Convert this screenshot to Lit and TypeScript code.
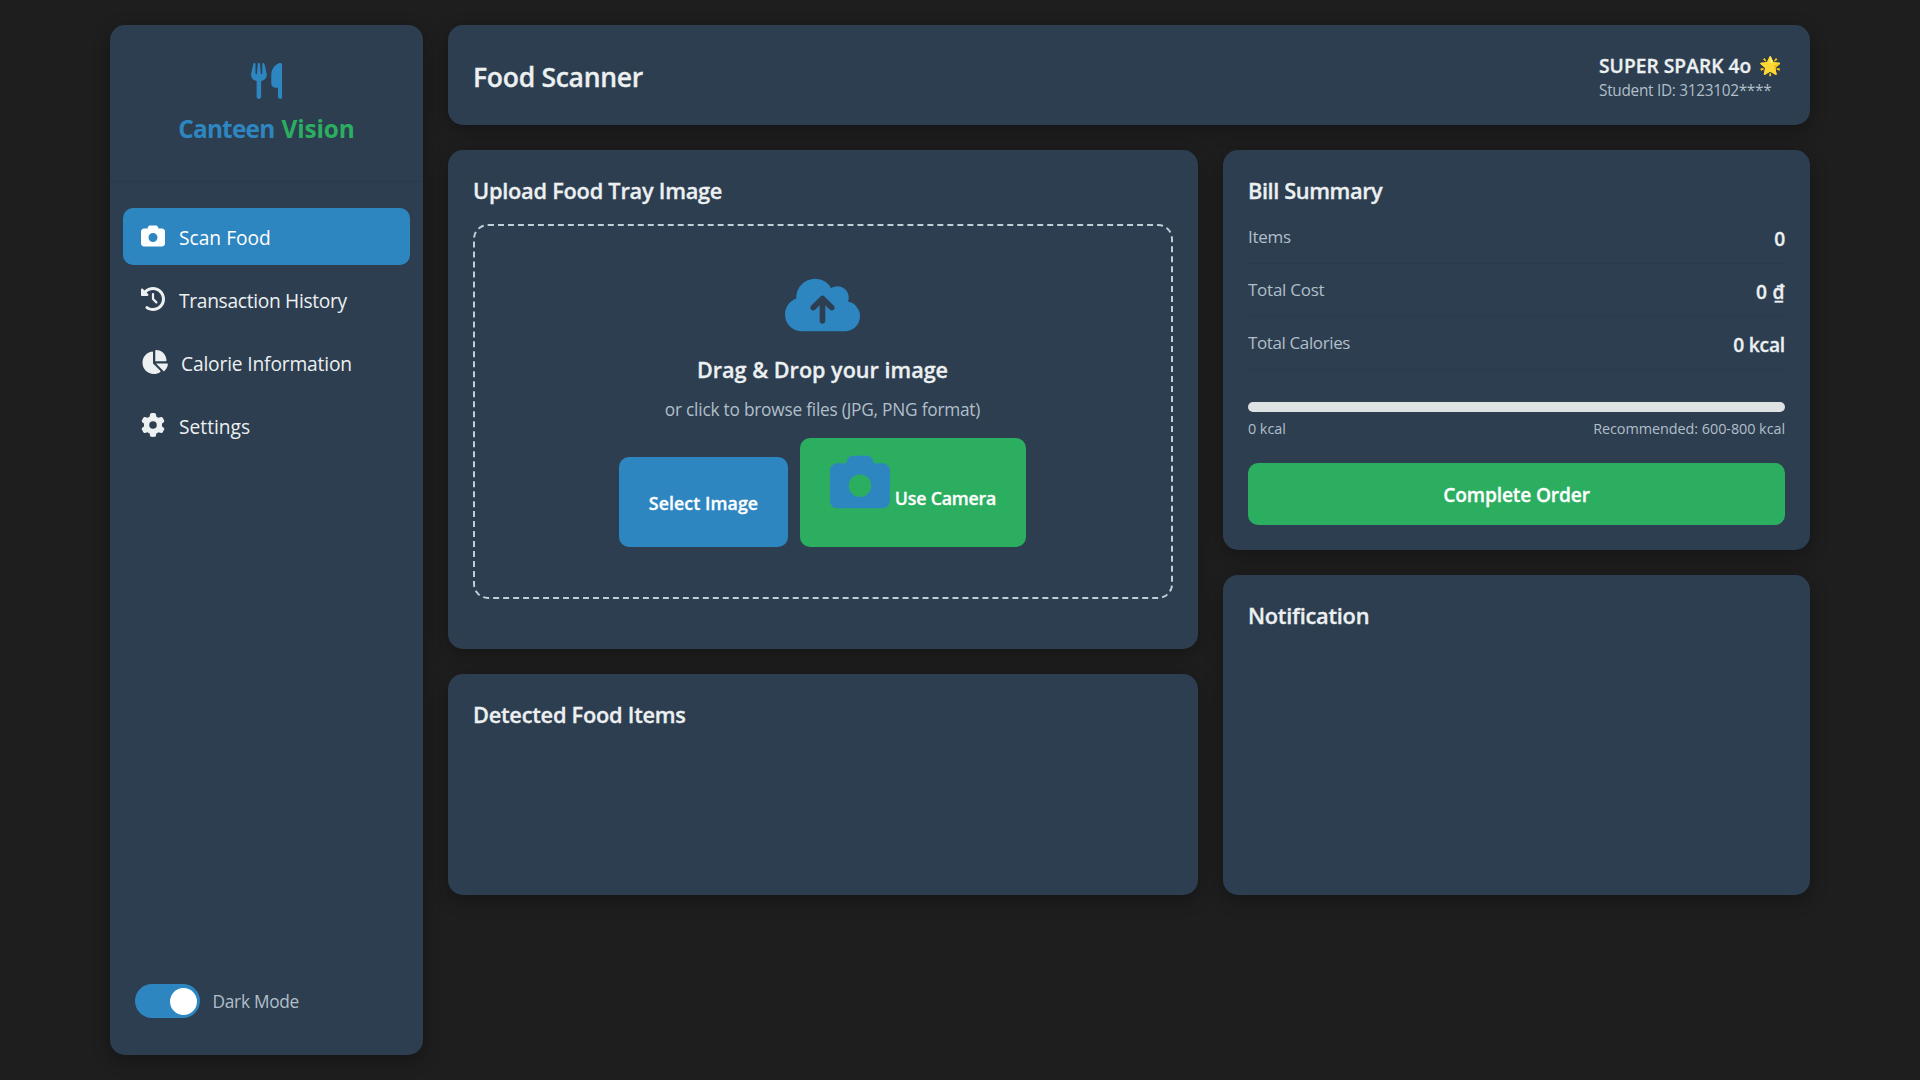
import { LitElement, html, css, svg } from "lit";
import { customElement, property, state } from "lit/decorators.js";
import { classMap } from "lit/directives/class-map.js";

type Glyph = { width: number; d: string };

const glyphs: Record<string, Glyph> = {
  utensils: {
    width: 448,
    d: "M416 0C400 0 288 32 288 176V288c0 35.3 28.7 64 64 64h32V480c0 17.7 14.3 32 32 32s32-14.3 32-32V352 240 32c0-17.7-14.3-32-32-32zM64 16C64 7.8 57.9 1 49.7 .1S34.2 4.6 32.4 12.5L2.1 148.8C.7 155.1 0 161.5 0 167.9c0 45.9 35.1 83.6 80 87.7V480c0 17.7 14.3 32 32 32s32-14.3 32-32V255.6c44.9-4.1 80-41.8 80-87.7c0-6.4-.7-12.8-2.1-19.1L191.6 12.5c-1.8-8-9.3-13.3-17.4-12.4S160 7.8 160 16V150.2c0 5.4-4.4 9.8-9.8 9.8c-5.1 0-9.3-3.9-9.8-9L127.9 14.6C127.2 6.3 120.3 0 112 0s-15.2 6.3-15.9 14.6L83.7 151c-.5 5.1-4.7 9-9.8 9c-5.4 0-9.8-4.4-9.8-9.8V16z",
  },
  camera: {
    width: 512,
    d: "M149.1 64.8L138.7 96H64C28.7 96 0 124.7 0 160V416c0 35.3 28.7 64 64 64H448c35.3 0 64-28.7 64-64V160c0-35.3-28.7-64-64-64H373.3L362.9 64.8C356.4 45.2 338.1 32 317.4 32H194.6c-20.7 0-39 13.2-45.5 32.8zM256 192a96 96 0 1 1 0 192 96 96 0 1 1 0-192z",
  },
  history: {
    width: 512,
    d: "M75 75L41 41C25.9 25.9 0 36.6 0 57.9V168c0 13.3 10.7 24 24 24H134.1c21.4 0 32.1-25.9 17-41l-30.8-30.8C155 85.5 203 64 256 64c106 0 192 86 192 192s-86 192-192 192c-40.8 0-78.6-12.7-109.7-34.4c-14.5-10.1-34.4-6.6-44.6 7.9s-6.6 34.4 7.9 44.6C151.2 495 201.7 512 256 512c141.4 0 256-114.6 256-256S397.4 0 256 0C185.3 0 121.3 28.7 75 75zm181 53c-13.3 0-24 10.7-24 24V256c0 6.4 2.5 12.5 7 17l72 72c9.4 9.4 24.6 9.4 33.9 0s9.4-24.6 0-33.9l-65-65V152c0-13.3-10.7-24-24-24z",
  },
  pie: {
    width: 576,
    d: "M304 240V16.6c0-9 7-16.6 16-16.6C443.7 0 544 100.3 544 224c0 9-7.6 16-16.6 16H304zM32 272C32 150.7 122.1 50.3 239 34.3c9.2-1.3 17 6.1 17 15.4V288L412.5 444.5c6.7 6.7 6.2 17.7-1.5 23.1C371.8 495.6 323.8 512 272 512C139.5 512 32 404.6 32 272zm526.4 16c9.3 0 16.6 7.8 15.4 17c-7.7 55.9-34.6 105.6-73.9 142.3c-6 5.6-15.4 5.2-21.2-.7L320 288H558.4z",
  },
  gear: {
    width: 512,
    d: "M495.9 166.6c3.2 8.7 .5 18.4-6.4 24.6l-43.3 39.4c1.1 8.3 1.7 16.8 1.7 25.4s-.6 17.1-1.7 25.4l43.3 39.4c6.9 6.2 9.6 15.9 6.4 24.6c-4.4 11.9-9.7 23.3-15.8 34.3l-4.7 8.1c-6.6 11-14 21.4-22.1 31.2c-5.9 7.2-15.7 9.6-24.5 6.8l-55.7-17.7c-13.4 10.3-28.2 18.9-44 25.4l-12.5 57.1c-2 9.1-9 16.3-18.2 17.8c-13.8 2.3-28 3.5-42.5 3.5s-28.7-1.2-42.5-3.5c-9.2-1.5-16.2-8.7-18.2-17.8l-12.5-57.1c-15.8-6.5-30.6-15.1-44-25.4L83.1 425.9c-8.8 2.8-18.6 .3-24.5-6.8c-8.1-9.8-15.5-20.2-22.1-31.2l-4.7-8.1c-6.1-11-11.4-22.4-15.8-34.3c-3.2-8.7-.5-18.4 6.4-24.6l43.3-39.4C64.6 273.1 64 264.6 64 256s.6-17.1 1.7-25.4L22.4 191.2c-6.9-6.2-9.6-15.9-6.4-24.6c4.4-11.9 9.7-23.3 15.8-34.3l4.7-8.1c6.6-11 14-21.4 22.1-31.2c5.9-7.2 15.7-9.6 24.5-6.8l55.7 17.7c13.4-10.3 28.2-18.9 44-25.4l12.5-57.1c2-9.1 9-16.3 18.2-17.8C227.3 1.2 241.5 0 256 0s28.7 1.2 42.5 3.5c9.2 1.5 16.2 8.7 18.2 17.8l12.5 57.1c15.8 6.5 30.6 15.1 44 25.4l55.7-17.7c8.8-2.8 18.6-.3 24.5 6.8c8.1 9.8 15.5 20.2 22.1 31.2l4.7 8.1c6.1 11 11.4 22.4 15.8 34.3zM256 336a80 80 0 1 0 0-160 80 80 0 1 0 0 160z",
  },
  cloud: {
    width: 640,
    d: "M144 480C64.5 480 0 415.5 0 336c0-62.8 40.2-116.2 96.2-135.9c-.1-2.7-.2-5.4-.2-8.1c0-88.4 71.6-160 160-160c59.3 0 111 32.2 138.7 80.2C409.9 102 428.3 96 448 96c53 0 96 43 96 96c0 12.2-2.3 23.8-6.4 34.6C596 238.4 640 290.1 640 352c0 70.7-57.3 128-128 128H144zm79-217c-9.4 9.4-9.4 24.6 0 33.9s24.6 9.4 33.9 0l39-39V392c0 13.3 10.7 24 24 24s24-10.7 24-24V257.9l39 39c9.4 9.4 24.6 9.4 33.9 0s9.4-24.6 0-33.9l-80-80c-9.4-9.4-24.6-9.4-33.9 0l-80 80z",
  },
};

/** Solid glyph, as tall as the element's font size. */
@customElement("solid-icon")
export class SolidIcon extends LitElement {
  @property() name = "camera";

  static styles = css`
    :host {
      display: block;
      flex: none;
      line-height: 0;
    }
    .glyph {
      display: block;
      height: 1em;
      width: auto;
      fill: currentColor;
    }
  `;

  render() {
    const g = glyphs[this.name];
    return html`<svg class="glyph" viewBox="0 0 ${g.width} 512" aria-hidden="true">
      ${svg`<path d=${g.d}></path>`}
    </svg>`;
  }
}

@customElement("app-root")
export class AppRoot extends LitElement {
  @state() private active = "scan";
  @state() private dark = true;

  private nav = [
    { id: "scan", icon: "camera", label: "Scan Food" },
    { id: "history", icon: "history", label: "Transaction History" },
    { id: "calorie", icon: "pie", label: "Calorie Information" },
    { id: "settings", icon: "gear", label: "Settings" },
  ];

  private bill = [
    { id: "items", label: "Items", value: "0" },
    { id: "cost", label: "Total Cost", value: "0 ₫" },
    { id: "calories", label: "Total Calories", value: "0 kcal" },
  ];

  static styles = css`
    :host {
      --card: #2c3e50;
      --blue: #2e86c1;
      --green: #2bae60;
      --text: #ecf0f1;
      --muted: #b2bec9;
      --line: rgba(0, 0, 0, 0.06);
      display: block;
      min-height: 1080px;
      background: #1e1e1e;
      color: var(--text);
      font-family: "Open Sans", "Noto Sans", sans-serif;
    }
    * {
      box-sizing: border-box;
    }
    .page {
      display: grid;
      grid-template-columns: 313px 1362px;
      gap: 25px;
      width: 1700px;
      height: 1080px;
      margin: 0 auto;
      padding: 25px 0;
    }
    .card {
      background: var(--card);
      border-radius: 15px;
      box-shadow: 0 5px 18px rgba(0, 0, 0, 0.3);
    }

    .sidebar {
      display: flex;
      flex-direction: column;
      padding-bottom: 37px;
    }
    .brand {
      display: flex;
      flex-direction: column;
      align-items: center;
      height: 157px;
      padding-top: 38px;
      border-bottom: 1px solid rgba(0, 0, 0, 0.05);
    }
    .brand-icon {
      font-size: 36px;
      color: var(--blue);
    }
    .brand-name {
      display: flex;
      gap: 7px;
      margin-top: 14px;
      font-size: 24.4px;
      font-weight: 700;
      line-height: 32px;
      color: var(--blue);
      letter-spacing: -0.8px;
    }
    .brand-accent {
      color: var(--green);
      letter-spacing: -0.1px;
    }
    .nav {
      display: flex;
      flex-direction: column;
      gap: 6px;
      padding: 26px 13px 0;
    }
    .nav-item {
      display: flex;
      align-items: center;
      gap: 14px;
      height: 57px;
      padding: 0 18px;
      border-radius: 10px;
      font-size: 19.2px;
    }
    .nav-item.active {
      background: var(--blue);
      color: #fff;
    }
    .nav-icon {
      font-size: 24px;
      margin-bottom: 2px;
    }
    .nav-label {
      padding-top: 2px;
      line-height: 28px;
      white-space: nowrap;
    }
    .nav-label.history {
      letter-spacing: -0.31px;
    }
    .nav-label.calorie {
      margin-left: -1px;
      letter-spacing: -0.16px;
    }
    .mode {
      display: flex;
      align-items: center;
      gap: 12.5px;
      margin-top: auto;
      padding-left: 25px;
    }
    .toggle {
      display: flex;
      align-items: center;
      width: 65px;
      height: 34px;
      padding: 0 3px 0 4px;
      border-radius: 17px;
      background: #8a9aa8;
    }
    .toggle.on {
      justify-content: flex-end;
      background: var(--blue);
    }
    .knob {
      width: 27px;
      height: 27px;
      border-radius: 50%;
      background: #fff;
    }
    .mode-label {
      padding-top: 1px;
      font-size: 17.3px;
      letter-spacing: -0.27px;
      color: var(--muted);
    }

    .main {
      display: flex;
      flex-direction: column;
      gap: 25px;
    }
    .header {
      display: flex;
      justify-content: space-between;
      height: 100px;
      padding: 0 25px;
    }
    .page-title,
    .panel-title,
    .drop-title,
    .user-name,
    .button,
    .row-value {
      font-weight: 600;
      -webkit-text-stroke: 0.3px currentColor;
    }
    .page-title {
      margin: 0;
      padding-top: 2px;
      font-size: 26.5px;
      line-height: 100px;
      letter-spacing: -0.28px;
    }
    .user {
      width: 186px;
      padding-top: 27px;
    }
    .user-name {
      display: flex;
      gap: 8px;
      font-size: 19.2px;
      line-height: 27px;
      letter-spacing: 0.04px;
      white-space: nowrap;
    }
    .spark {
      font-size: 18px;
      letter-spacing: 0;
    }
    .user-id {
      margin-top: 1px;
      font-size: 15.36px;
      line-height: 21px;
      letter-spacing: -0.29px;
      color: var(--muted);
    }

    .columns {
      display: grid;
      grid-template-columns: 750px 587px;
      gap: 25px;
    }
    .column {
      display: flex;
      flex-direction: column;
      gap: 25px;
    }
    .panel {
      padding: 25px;
    }
    .panel-title {
      margin: 0;
      font-size: 21.8px;
      line-height: 31px;
      letter-spacing: -0.26px;
    }
    .upload {
      height: 499px;
    }
    .detected {
      height: 221px;
    }
    .summary {
      height: 400px;
    }
    .notification {
      height: 320px;
    }
    .summary .panel-title {
      letter-spacing: -0.42px;
    }

    .dropzone {
      display: flex;
      flex-direction: column;
      align-items: center;
      height: 375px;
      margin-top: 18px;
      padding-top: 49px;
      padding-right: 1px;
      border: 2px dashed #bdd0d8;
      border-radius: 15px;
    }
    .cloud {
      font-size: 60px;
      color: var(--blue);
    }
    .drop-title {
      margin: 20px 0 0;
      font-size: 21.6px;
      line-height: 30px;
    }
    .drop-hint {
      margin: 12px 0 0;
      font-size: 17.28px;
      line-height: 26px;
      letter-spacing: -0.22px;
      color: var(--muted);
    }
    .actions {
      display: flex;
      align-items: flex-end;
      gap: 12px;
      margin-top: 15px;
    }
    .button {
      display: flex;
      justify-content: center;
      border: 0;
      border-radius: 10px;
      padding: 0;
      color: #fff;
      font-family: inherit;
      font-size: 17.76px;
      line-height: 26px;
      white-space: nowrap;
    }
    .select {
      align-items: center;
      width: 169px;
      height: 90px;
      padding-top: 2px;
      background: var(--blue);
      letter-spacing: 0.08px;
    }
    .use-camera {
      gap: 5px;
      width: 226px;
      height: 109px;
      padding-top: 14px;
      background: var(--green);
      letter-spacing: -0.2px;
    }
    .camera-icon {
      font-size: 60px;
      color: var(--blue);
    }
    .camera-label {
      margin-top: 33px;
    }

    .rows {
      display: flex;
      flex-direction: column;
      margin-top: 5px;
    }
    .row {
      display: flex;
      justify-content: space-between;
      height: 53px;
      padding-top: 13px;
      border-bottom: 1px solid var(--line);
    }
    .row-label {
      font-size: 17px;
      line-height: 26px;
      letter-spacing: -0.25px;
      color: var(--muted);
    }
    .row-label.calories {
      letter-spacing: -0.38px;
    }
    .row-value {
      padding-top: 1px;
      font-size: 19.2px;
      line-height: 28px;
      letter-spacing: -0.2px;
    }
    .row-value.cost {
      letter-spacing: 0.3px;
    }
    .meter {
      height: 10px;
      margin-top: 32px;
      border-radius: 5px;
      background: #dfe2e2;
    }
    .scale {
      display: flex;
      justify-content: space-between;
      margin-top: 6px;
      font-size: 14.4px;
      line-height: 22px;
      letter-spacing: -0.05px;
      color: var(--muted);
    }
    .complete {
      align-items: center;
      width: 100%;
      height: 62px;
      margin-top: 23px;
      padding-top: 2px;
      background: var(--green);
      font-size: 19.2px;
      letter-spacing: -0.16px;
    }
  `;

  render() {
    return html`
      <div class="page">
        <aside class="sidebar card">
          <div class="brand">
            <solid-icon class="brand-icon" name="utensils"></solid-icon>
            <div class="brand-name"><span>Canteen</span><span class="brand-accent">Vision</span></div>
          </div>
          <nav class="nav">
            ${this.nav.map(
              (n) => html`<a
                class=${classMap({ "nav-item": true, active: n.id === this.active })}
                @click=${() => (this.active = n.id)}
              >
                <solid-icon class="nav-icon" name=${n.icon}></solid-icon>
                <span class="nav-label ${n.id}">${n.label}</span>
              </a>`
            )}
          </nav>
          <div class="mode">
            <div
              class=${classMap({ toggle: true, on: this.dark })}
              role="switch"
              aria-checked=${this.dark}
              @click=${() => (this.dark = !this.dark)}
            >
              <div class="knob"></div>
            </div>
            <span class="mode-label">Dark Mode</span>
          </div>
        </aside>

        <main class="main">
          <header class="header card">
            <h1 class="page-title">Food Scanner</h1>
            <div class="user">
              <div class="user-name"><span>SUPER SPARK 4o</span><span class="spark">🌟</span></div>
              <div class="user-id">Student ID: 3123102****</div>
            </div>
          </header>

          <div class="columns">
            <div class="column">
              <section class="card panel upload">
                <h2 class="panel-title">Upload Food Tray Image</h2>
                <div class="dropzone">
                  <solid-icon class="cloud" name="cloud"></solid-icon>
                  <h3 class="drop-title">Drag &amp; Drop your image</h3>
                  <p class="drop-hint">or click to browse files (JPG, PNG format)</p>
                  <div class="actions">
                    <button class="button select">Select Image</button>
                    <button class="button use-camera">
                      <solid-icon class="camera-icon" name="camera"></solid-icon>
                      <span class="camera-label">Use Camera</span>
                    </button>
                  </div>
                </div>
              </section>
              <section class="card panel detected">
                <h2 class="panel-title">Detected Food Items</h2>
              </section>
            </div>

            <div class="column">
              <section class="card panel summary">
                <h2 class="panel-title">Bill Summary</h2>
                <div class="rows">
                  ${this.bill.map(
                    (r) => html`<div class="row">
                      <span class="row-label ${r.id}">${r.label}</span>
                      <span class="row-value ${r.id}">${r.value}</span>
                    </div>`
                  )}
                </div>
                <div class="meter"></div>
                <div class="scale"><span>0 kcal</span><span>Recommended: 600-800 kcal</span></div>
                <button class="button complete">Complete Order</button>
              </section>
              <section class="card panel notification">
                <h2 class="panel-title">Notification</h2>
              </section>
            </div>
          </div>
        </main>
      </div>
    `;
  }
}
